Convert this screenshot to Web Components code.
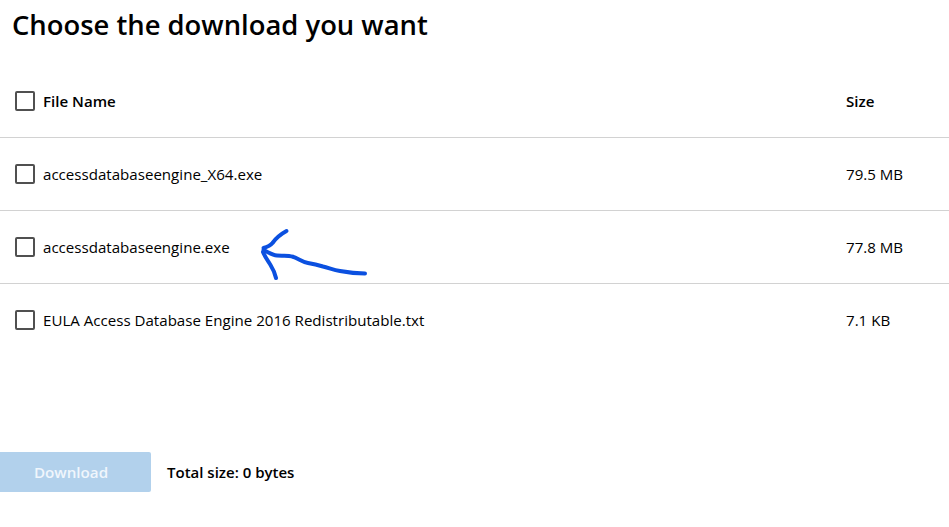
<!DOCTYPE html>
<html>
<head>
<meta charset="utf-8">
<title>Choose the download you want</title>
<style>
  html, body { margin: 0; background: #fff; }
  body { font-family: "Open Sans", "Noto Sans", sans-serif; color: #000; width: 949px; height: 527px; overflow: hidden; position: relative; }
</style>
</head>
<body>
<download-page>
  <file-row header name="File Name" size="Size"></file-row>
  <file-row name="accessdatabaseengine_X64.exe" size="79.5 MB"></file-row>
  <file-row name="accessdatabaseengine.exe" size="77.8 MB"></file-row>
  <file-row last name="EULA Access Database Engine 2016 Redistributable.txt" size="7.1 KB"></file-row>
</download-page>
<pen-arrow></pen-arrow>
<script>
class FileRow extends HTMLElement {
  constructor() {
    super();
    this._root = this.attachShadow({mode: 'open'});
  }
  connectedCallback() {
    this._root.innerHTML = `
      <style>
        :host {
          display: grid;
          grid-template-columns: 20px 1fr 103px;
          column-gap: 8px;
          align-items: center;
          height: 72px;
          padding-left: 15px;
          border-bottom: 1px solid #d2d2d2;
          font-size: 15.1px;
        }
        :host([header]) { font-weight: 600; }
        :host([last]) { border-bottom: none; }
        .box {
          box-sizing: border-box;
          width: 20px;
          height: 20px;
          border: 2px solid #505050;
          border-radius: 2px;
        }
      </style>
      <span class="box"></span>
      <span class="name"></span>
      <span class="size"></span>
    `;
    this._root.querySelector('.name').textContent = this.getAttribute('name');
    this._root.querySelector('.size').textContent = this.getAttribute('size');
  }
}

class DownloadPage extends HTMLElement {
  constructor() {
    super();
    this._root = this.attachShadow({mode: 'open'});
  }
  connectedCallback() {
    this._root.innerHTML = `
      <style>
        :host { display: block; }
        h1 {
          margin: 0;
          padding: 6px 0 0 12px;
          height: 65px;
          box-sizing: border-box;
          font-size: 27.4px;
          line-height: 38px;
          font-weight: 600;
        }
        .table { display: block; }
        .footer {
          display: flex;
          align-items: center;
          gap: 16px;
          margin-top: 96px;
        }
        .download {
          width: 151px;
          height: 40px;
          border: none;
          padding: 0 9px 0 0;
          background: #b2d1ec;
          border-radius: 0 2px 2px 0;
          color: #f0f6fc;
          font: 600 15.2px "Open Sans", "Noto Sans", sans-serif;
          text-align: center;
        }
        .total { font-size: 15px; font-weight: 600; }
      </style>
      <h1>Choose the download you want</h1>
      <div class="table"><slot></slot></div>
      <div class="footer">
        <button class="download" disabled>Download</button>
        <span class="total">Total size: 0 bytes</span>
      </div>
    `;
  }
}

// hand drawn annotation, sits on top of the table
class PenArrow extends HTMLElement {
  constructor() {
    super();
    this._root = this.attachShadow({mode: 'open'});
  }
  connectedCallback() {
    this._root.innerHTML = `
      <style>
        :host { position: absolute; left: 0; top: 0; width: 949px; height: 527px; pointer-events: none; }
        svg { display: block; }
        path { fill: none; stroke: #0b50e0; stroke-width: 4; stroke-linecap: round; stroke-linejoin: round; }
      </style>
      <svg width="949" height="527" viewBox="0 0 949 527">
        <path d="M286.5 231 C281 234 276 238 272.5 243 C270 246 267 247 263.5 248"/>
        <path d="M263.5 250 C268 252 272 255 277 255.5 C283 256 288 255 292 256.5 C298 258 302 262 308 263 C314 264 318 265 323 266.5 C329 268 334 270 340 271 C348 272.5 356 273.5 365 273.5"/>
        <path d="M263 252 C265 257 268 261 270.5 265 C273 269 275 273 276 278"/>
      </svg>
    `;
  }
}

window.customElements.define('file-row', FileRow);
window.customElements.define('download-page', DownloadPage);
window.customElements.define('pen-arrow', PenArrow);
</script>
</body>
</html>
